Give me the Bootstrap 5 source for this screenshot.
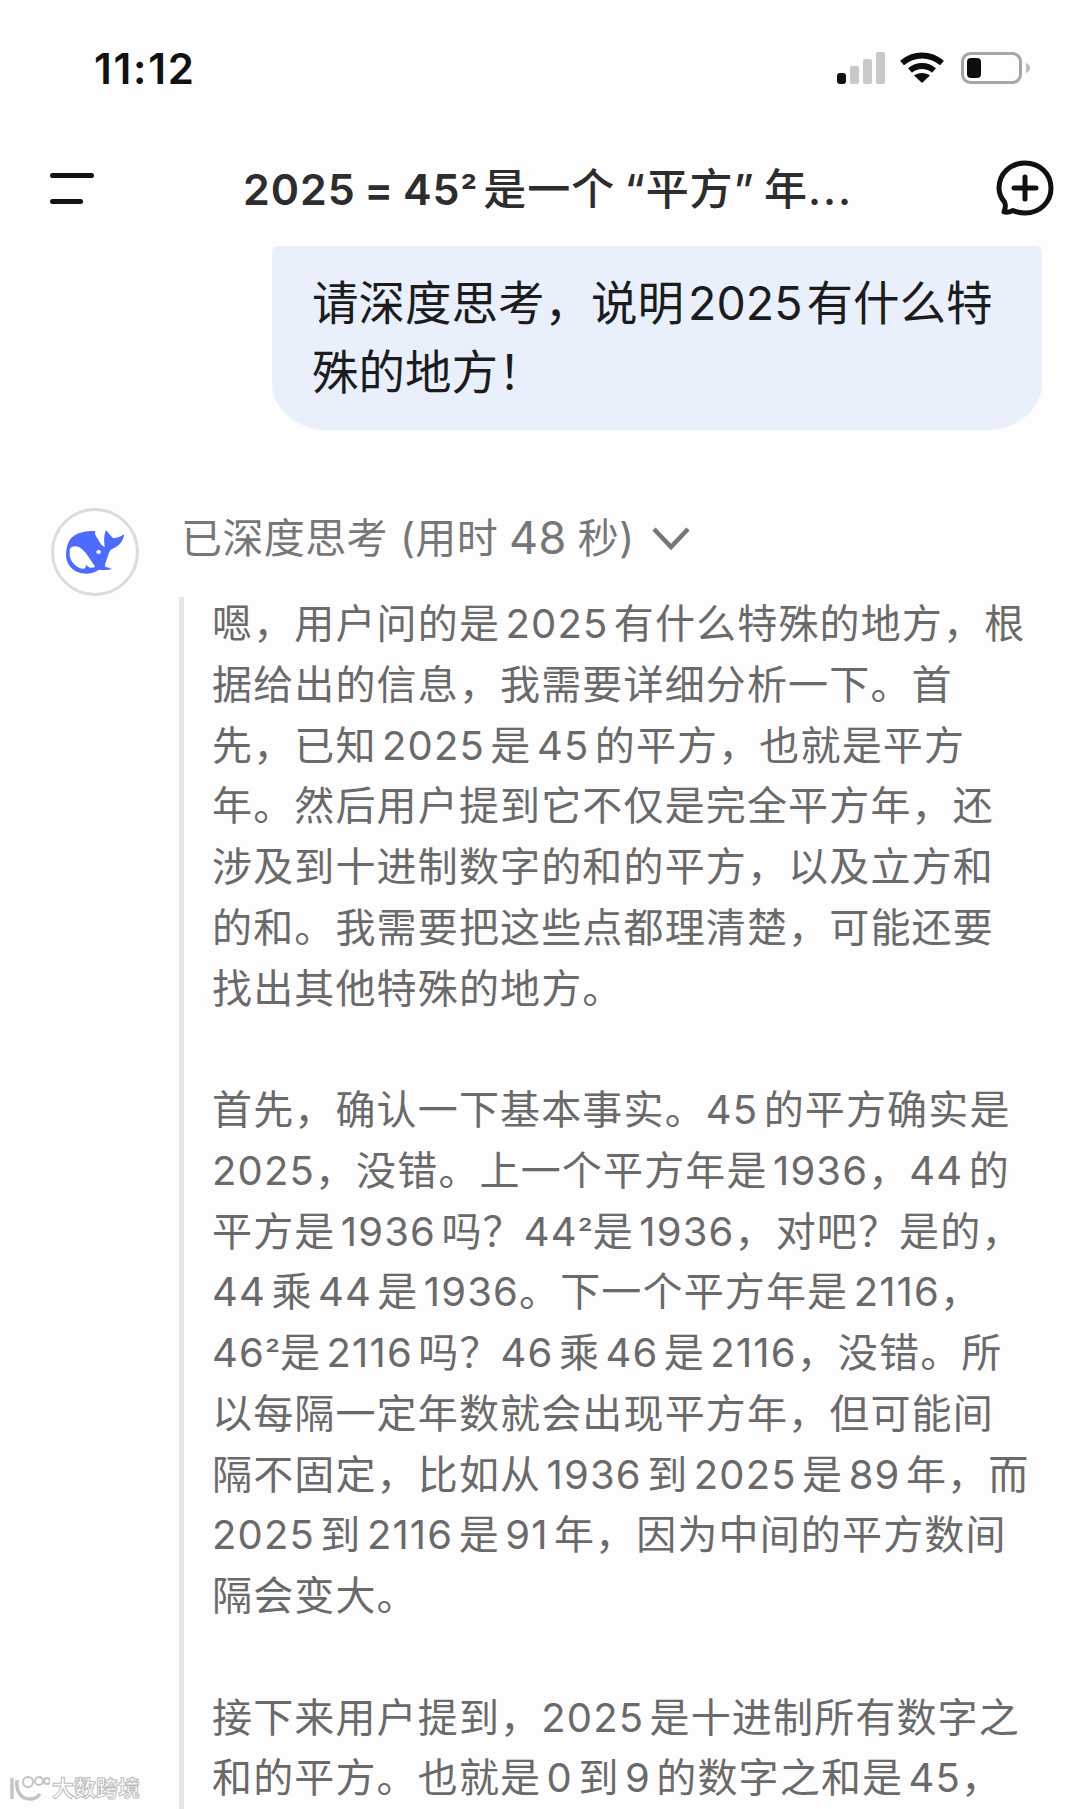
<!DOCTYPE html>
<html lang="zh">
<head>
<meta charset="utf-8">
<title>DeepSeek</title>
<link href="https://cdn.jsdelivr.net/npm/bootstrap@5.3.0/dist/css/bootstrap.min.css" rel="stylesheet">
<style>
html,body{height:1809px;overflow:hidden}
body{background:#fdfdfd;font-family:Inter,"Noto Sans CJK SC",sans-serif;position:relative;width:1080px}
.sbar{height:118px;padding:52px 49px 0 94px}
.clock{font-size:42px;font-weight:600;line-height:34px;color:#111;letter-spacing:1.8px}
.sig-gap{margin-left:14px}
.wifi-gap{margin-left:16px}
.topnav{height:128px;padding:14px 26px 0 50px}
.tname{font-size:43px;font-weight:500;color:#2d2d2d;letter-spacing:.9px;word-spacing:-3px;white-space:nowrap;margin-left:149px;line-height:50px}
.tnum{font-weight:600}
.tdots{letter-spacing:2px}
.sqr{font-size:.85em;letter-spacing:0;line-height:0}
.tname .sqr{letter-spacing:-3px}
.bubble{background:#e9f0fc;margin:0 38px 0 272px;height:184px;border-radius:6px 6px 56px 56px / 6px 6px 46px 46px;padding:23px 0 0 40px;font-size:46.5px;line-height:69px;color:#1c1c1c;white-space:nowrap;word-spacing:-9px}
.chat{padding:78px 0 0 51px}
.avatar{width:88px;height:88px;border:3px solid #dcdcdc;border-radius:50%;flex:none;background:#fff}
.rside{margin-left:42px;width:900px}
.thinkhead{height:60px;font-size:41px;letter-spacing:.4px;color:#777;line-height:60px;white-space:nowrap;margin-bottom:29px}
.hnum{font-size:45px;margin:0 11px}
.chev{margin-left:17px}
.thinkbody{border-left:5px solid #e6e6e6;margin-left:-2px;padding-left:28px;font-size:40px;letter-spacing:1.15px;word-spacing:-7px;line-height:60.75px;color:#6a6a6a;white-space:nowrap;height:1300px}
.thinkbody p{margin:0 0 60.75px;position:relative;top:-3px}
.mark-wm{position:absolute;left:10px;top:1775px;display:flex;align-items:center;gap:2px}
.wm-text{font-size:22px;line-height:26px;color:#fff;-webkit-text-stroke:1px #bdbdbd;font-weight:700}
</style>
</head>
<body>
<div class="sbar d-flex justify-content-between align-items-start">
  <div class="clock">11:12</div>
  <div class="d-flex align-items-start">
    <svg width="48" height="32" viewBox="0 0 48 32"><rect x="0" y="21" width="9" height="11" rx="3" fill="#111"/><rect x="13" y="14" width="9" height="18" rx="2" fill="#c9c9c9"/><rect x="26" y="7" width="9" height="25" rx="2" fill="#c9c9c9"/><rect x="39" y="0" width="9" height="32" rx="2" fill="#c9c9c9"/></svg>
    <svg class="sig-gap" width="46" height="32" viewBox="0 0 46 32" fill="none" stroke="#0c0c0c" stroke-width="6"><path d="M3 11C15 1 31 1 43 11"/><path d="M11 18.500C18 12.500 28 12.500 35 18.500"/><path d="M23 31 L15 23.500C19 20 27 20 31 23.500Z" fill="#0c0c0c" stroke="none"/></svg>
    <svg class="wifi-gap" width="70" height="32" viewBox="0 0 70 32"><rect x="1.500" y="1.500" width="58" height="29" rx="8" fill="none" stroke="#a5a5a5" stroke-width="3"/><rect x="6" y="6" width="14" height="20" rx="4" fill="#0c0c0c"/><path d="M65 11C68 12 69 14 69 16C69 18 68 20 65 21Z" fill="#bdbdbd"/></svg>
  </div>
</div>
<div class="topnav d-flex align-items-center">
  <svg width="44" height="32" viewBox="0 0 44 32"><rect x="0" y="0" width="44" height="5" rx="2.500" fill="#111"/><rect x="0" y="26" width="33" height="5" rx="2.500" fill="#111"/></svg>
  <div class="tname"><span class="tnum">2025 = 45<span class="sqr">²</span></span> 是一个 “平方” 年<span class="tdots">...</span></div>
  <svg class="ms-auto" width="58" height="58" viewBox="0 0 58 58" fill="none" stroke="#111" stroke-width="5"><path d="M8 52C10 47 10 45 8.500 42C5 38 3 33 3 28C3 14 14 3 29 3C44 3 55 14 55 28C55 42 44 53 29 53C24 53 20 52 17 50.500C14 52 11 53 8 52Z" stroke-linejoin="round"/><path d="M29 17V39M18 28H40" stroke-linecap="round"/></svg>
</div>
<div class="bubble">请深度思考，说明 2025 有什么特<br>殊的地方！</div>
<div class="chat d-flex align-items-start">
  <div class="avatar d-flex align-items-center justify-content-center">
    <svg width="60" height="46" viewBox="105 118 182 140"><path fill="#4d6bfe" d="M120 150C135 130 170 122 198 125C192 132 200 140 207 152C214 164 219 172 226 172C222 155 224 135 229 122C238 130 244 140 252 146C264 145 275 141 285 134C282 155 270 170 250 178C240 182 238 192 234 204C230 216 226 226 226 232L248 240C232 244 220 243 208 242C190 255 165 258 145 250C120 240 105 215 108 190C109 175 113 160 120 150Z"/><path fill="#fff" d="M119 180C125 168 142 168 155 178C170 190 182 212 196 232C188 240 178 236 168 226C170 234 166 240 158 239C140 236 124 220 119 200Z"/><ellipse cx="207" cy="188" rx="7" ry="6" fill="#fff"/></svg>
  </div>
  <div class="rside">
    <div class="thinkhead d-flex align-items-center">已深度思考 (用时<span class="hnum">48</span>秒)
      <svg class="chev" width="38" height="24" viewBox="0 0 38 24" fill="none" stroke="#777" stroke-width="4.500"><path d="M2 3L19 21L36 3"/></svg>
    </div>
    <div class="thinkbody">
      <p>嗯，用户问的是 2025 有什么特殊的地方，根<br>据给出的信息，我需要详细分析一下。首<br>先，已知 2025 是 45 的平方，也就是平方<br>年。然后用户提到它不仅是完全平方年，还<br>涉及到十进制数字的和的平方，以及立方和<br>的和。我需要把这些点都理清楚，可能还要<br>找出其他特殊的地方。</p>
      <p>首先，确认一下基本事实。45 的平方确实是<br>2025，没错。上一个平方年是 1936，44 的<br>平方是 1936 吗？44<span class="sqr">²</span>是 1936，对吧？是的，<br>44 乘 44 是 1936。下一个平方年是 2116，<br>46<span class="sqr">²</span>是 2116 吗？46 乘 46 是 2116，没错。所<br>以每隔一定年数就会出现平方年，但可能间<br>隔不固定，比如从 1936 到 2025 是 89 年，而<br>2025 到 2116 是 91 年，因为中间的平方数间<br>隔会变大。</p>
      <p>接下来用户提到，2025 是十进制所有数字之<br>和的平方。也就是 0 到 9 的数字之和是 45，</p>
    </div>
  </div>
</div>
<div class="mark-wm">
  <svg width="40" height="26" viewBox="0 0 40 26" fill="none" stroke="#c4c4c4" stroke-width="2"><path d="M2 3V24M7 5C6 14 9 24 20 24C25 24 28 22 30 19" stroke-width="3.500"/><circle cx="18" cy="7" r="5"/><circle cx="29" cy="6" r="4"/><circle cx="37" cy="6" r="3"/></svg>
  <span class="wm-text">大数跨境</span>
</div>
</body>
</html>
